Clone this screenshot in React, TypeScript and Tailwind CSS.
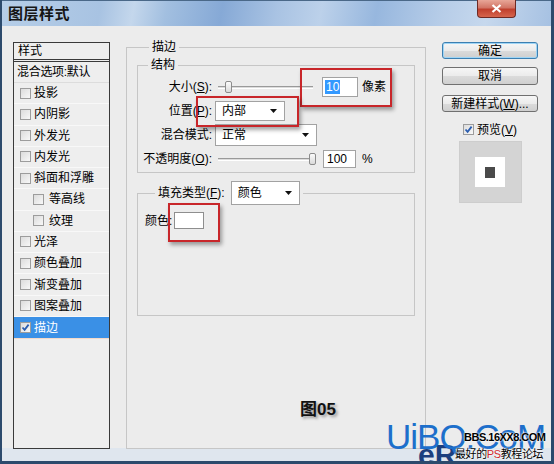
import React from 'react'

const items = [
  { t: '投影' },
  { t: '内阴影' },
  { t: '外发光' },
  { t: '内发光' },
  { t: '斜面和浮雕' },
  { t: '等高线', sub: true },
  { t: '纹理', sub: true },
  { t: '光泽' },
  { t: '颜色叠加' },
  { t: '渐变叠加' },
  { t: '图案叠加' },
  { t: '描边', sel: true },
]

function CheckBox({ checked = false }: { checked?: boolean }) {
  return (
    <span className="flex h-[11px] w-[11px] shrink-0 items-center justify-center border border-[#9c9c9c] bg-[linear-gradient(135deg,#dcdcdc,#f8f8f8)]">
      {checked && (
        <svg width="9" height="9" viewBox="0 0 9 9">
          <path d="M1.5 4.5 L3.6 6.8 L7.6 1.6" fill="none" stroke="#2a5db0" strokeWidth="1.8" />
        </svg>
      )}
    </span>
  )
}

function Arrow() {
  return (
    <svg width="7" height="4" viewBox="0 0 7 4" className="shrink-0">
      <path d="M0 0H7L3.5 4Z" fill="#111" />
    </svg>
  )
}

function Dropdown({ text, w, h }: { text: string; w: string; h: string }) {
  return (
    <div className={`flex items-center justify-between border border-[#a2a2a2] bg-white pl-[6px] pr-[7px] ${w} ${h}`}>
      <span>{text}</span>
      <Arrow />
    </div>
  )
}

function Slider({ pos }: { pos: 'start' | 'end' }) {
  return (
    <div className="relative flex h-[12px] w-[95px] items-center">
      <div className="h-[3px] w-full border-t border-[#9a9a9a] border-b border-b-white bg-[#dcdcdc]" />
      {pos === 'start' ? (
        <span className="absolute left-[7px] top-0 h-[12px] w-[7px] rounded-[2px] border border-[#8c8c8c] bg-[linear-gradient(#fbfbfb,#dadada)]" />
      ) : (
        <span className="absolute right-[-3px] top-0 h-[12px] w-[7px] rounded-[2px] border border-[#8c8c8c] bg-[linear-gradient(#fbfbfb,#dadada)]" />
      )}
    </div>
  )
}

function Button({ children, focus = false, h }: { children: React.ReactNode; focus?: boolean; h: string }) {
  return (
    <div
      className={`flex w-[96px] items-center justify-center rounded-[3px] border bg-[linear-gradient(#f6f6f6_0%,#ebebeb_50%,#dbdbdb_51%,#cfcfcf_100%)] ${h} ${
        focus ? 'border-[#3c7fb1] shadow-[inset_0_0_0_1px_#9fd5f5]' : 'border-[#707070]'
      }`}
    >
      {children}
    </div>
  )
}

export default function App() {
  return (
    <div className="relative h-[464px] w-[554px] overflow-hidden border-b-[3px] border-l-[2px] border-r-[3px] border-[#2c4a6c] bg-[#dfe6ee] font-['Liberation_Sans','Noto_Sans_CJK_SC',sans-serif] text-[12px] leading-[14px] text-black">
      {/* title bar */}
      <div className="relative flex h-[26px] items-center border-t border-[#4a6888] bg-[linear-gradient(100deg,#b6cee8_0%,#a8c3e2_18%,#c4d7ec_24%,#a2bfe0_30%,#86a9d6_40%,#a9c3e3_50%,#bcd1ea_58%,#97b7de_68%,#b7cde8_80%,#c6d8ed_88%,#a6c1e2_100%)] pl-[6px]">
        <span className="text-[15px] font-bold leading-none tracking-[0.5px] text-[#151515]">图层样式</span>
        <div className="absolute right-[35px] top-[-1px] flex h-[18px] w-[39px] items-center justify-center rounded-b-[4px] border border-t-0 border-[#6e2a24] bg-[linear-gradient(#e8a698_0%,#d27566_45%,#c0402e_55%,#d6654d_100%)]">
          <svg width="11" height="9" viewBox="0 0 11 9">
            <path d="M1.5 1 L9.5 8 M9.5 1 L1.5 8" stroke="#fff" strokeWidth="2.2" />
          </svg>
        </div>
      </div>

      {/* body */}
      <div className="flex h-[422px] items-start bg-[#ececec] pl-[11px] pt-[14px]">
        {/* style list */}
        <div className="mt-[2px] flex h-[407px] w-[97px] shrink-0 flex-col border border-[#3a3a3a] bg-[#eeeeee]">
          <div className="flex h-[19px] items-center border-b-[3px] border-double border-[#3a3a3a] pl-[4px]">样式</div>
          <div className="flex h-[21px] items-center border-b border-[#dcdcdc] pl-[3px] tracking-[-0.3px]">混合选项:默认</div>
          {items.map((it) =>
            it.sel ? (
              <div key={it.t} className="flex h-[21.27px] items-center gap-[3px] bg-[#3a90e6] pl-[6px] text-white">
                <CheckBox checked />
                <span>{it.t}</span>
              </div>
            ) : it.sub ? (
              <div key={it.t} className="flex h-[21.27px] items-center gap-[5px] border-b border-[#f8f8f8] pl-[19px]">
                <CheckBox />
                <span>{it.t}</span>
              </div>
            ) : (
              <div key={it.t} className="flex h-[21.27px] items-center gap-[3px] border-b border-[#f8f8f8] pl-[6px]">
                <CheckBox />
                <span>{it.t}</span>
              </div>
            )
          )}
          <div className="h-px bg-[#f3d9c9]" />
        </div>

        {/* middle */}
        <div className="relative ml-[16px] w-[300px] shrink-0">
          <fieldset className="h-[409px] border border-[#c6c6c6] px-[10px]">
            <legend className="ml-[12px] px-[3px] leading-[14px]">描边</legend>

            <fieldset className="mt-[4px] border border-[#c6c6c6] pb-[4px] pl-[2px]">
              <legend className="ml-[8px] px-[3px] leading-[14px]">结构</legend>
              <div className="mt-[5px] flex h-[20px] items-center">
                <span className="w-[72px] text-right">
                  大小(<span className="underline">S</span>):
                </span>
                <div className="ml-[6px]">
                  <Slider pos="start" />
                </div>
                <div className="ml-[9px] flex h-[20px] w-[36px] items-center border border-[#a2a2a2] bg-white pl-[2px]">
                  <span className="bg-[#3399ff] px-[1px] text-white">10</span>
                </div>
                <span className="ml-[4px]">像素</span>
              </div>
              <div className="mt-[4px] flex h-[20px] items-center">
                <span className="w-[72px] text-right">
                  位置(<span className="underline">P</span>):
                </span>
                <div className="ml-[3px]">
                  <Dropdown text="内部" w="w-[70px]" h="h-[20px]" />
                </div>
              </div>
              <div className="mt-[3px] flex h-[22px] items-center">
                <span className="w-[72px] text-right">混合模式:</span>
                <div className="ml-[3px]">
                  <Dropdown text="正常" w="w-[102px]" h="h-[22px]" />
                </div>
              </div>
              <div className="mt-[4px] flex h-[18px] items-center">
                <span className="w-[72px] text-right">
                  不透明度(<span className="underline">O</span>):
                </span>
                <div className="ml-[6px]">
                  <Slider pos="end" />
                </div>
                <div className="ml-[10px] flex h-[18px] w-[33px] items-center border border-[#a2a2a2] bg-white pl-[3px]">100</div>
                <span className="ml-[6px]">%</span>
              </div>
            </fieldset>

            <fieldset className="mt-[8px] h-[135px] border border-[#c6c6c6]">
              <legend className="ml-[17px] px-[3px]">
                <div className="flex items-center">
                  <span>
                    填充类型(<span className="underline">F</span>):
                  </span>
                  <div className="ml-[6px]">
                    <Dropdown text="颜色" w="w-[69px]" h="h-[24px]" />
                  </div>
                </div>
              </legend>
              <div className="mt-[7px] flex h-[17px] items-center pl-[7px]">
                <span>颜色:</span>
                <div className="ml-[2px] h-[17px] w-[30px] border border-[#8e8e8e] bg-white" />
              </div>
            </fieldset>
          </fieldset>

          {/* annotations */}
          <div className="absolute left-[174px] top-[28px] h-[39px] w-[92px] border-2 border-[#c8262a] shadow-[2px_3px_4px_rgba(0,0,0,0.35)]" />
          <div className="absolute left-[70px] top-[56px] h-[31px] w-[103px] border-2 border-[#c8262a] shadow-[2px_3px_4px_rgba(0,0,0,0.35)]" />
          <div className="absolute left-[42px] top-[163px] h-[39px] w-[52px] border-2 border-[#c8262a] shadow-[2px_3px_4px_rgba(0,0,0,0.35)]" />
          <div className="absolute left-[174px] top-[361px] text-[17px] font-bold leading-none text-[#111] [text-shadow:2px_2px_3px_rgba(0,0,0,0.35)]">
            图05
          </div>
        </div>

        {/* right */}
        <div className="ml-[16px] mt-[2px] flex w-[96px] shrink-0 flex-col">
          <Button focus h="h-[17px]">确定</Button>
          <div className="mt-[8px]">
            <Button h="h-[18px]">取消</Button>
          </div>
          <div className="mt-[10px]">
            <Button h="h-[17px]">
              新建样式(<span className="underline">W</span>)...
            </Button>
          </div>
          <div className="mt-[11px] flex h-[13px] items-center justify-center gap-[3px]">
            <CheckBox checked />
            <span>
              预览(<span className="underline">V</span>)
            </span>
          </div>
          <div className="mx-auto mt-[5px] flex h-[62px] w-[63px] items-center justify-center border border-[#cdcdcd] bg-[#d4d4d4]">
            <div className="flex h-[30px] w-[30px] items-center justify-center bg-white">
              <div className="h-[11px] w-[10px] bg-[#4a4a4a]" />
            </div>
          </div>
        </div>
      </div>

      {/* watermark */}
      <div className="absolute left-[416px] top-[440px] text-[30px] font-bold leading-none text-[#1b3f7e]">eR</div>
      <div className="absolute left-[384px] top-[419px] font-['Liberation_Sans',sans-serif] text-[35px] leading-none tracking-[-1px] text-[#1d6fcb]">
        UiBQ.CoM
      </div>
      <div className="absolute left-[462px] top-[432px] text-[11px] font-bold leading-none tracking-[-0.5px] text-black [text-shadow:0_0_2px_#fff,0_0_2px_#fff]">
        BBS.16XX8.COM
      </div>
      <div className="absolute left-[453px] top-[449px] whitespace-nowrap text-[11px] leading-none tracking-[-0.4px] text-black [text-shadow:0_0_2px_#fff,0_0_2px_#fff]">
        最好的<span className="text-[#d0282c]">PS</span>教程论坛
      </div>
    </div>
  )
}
